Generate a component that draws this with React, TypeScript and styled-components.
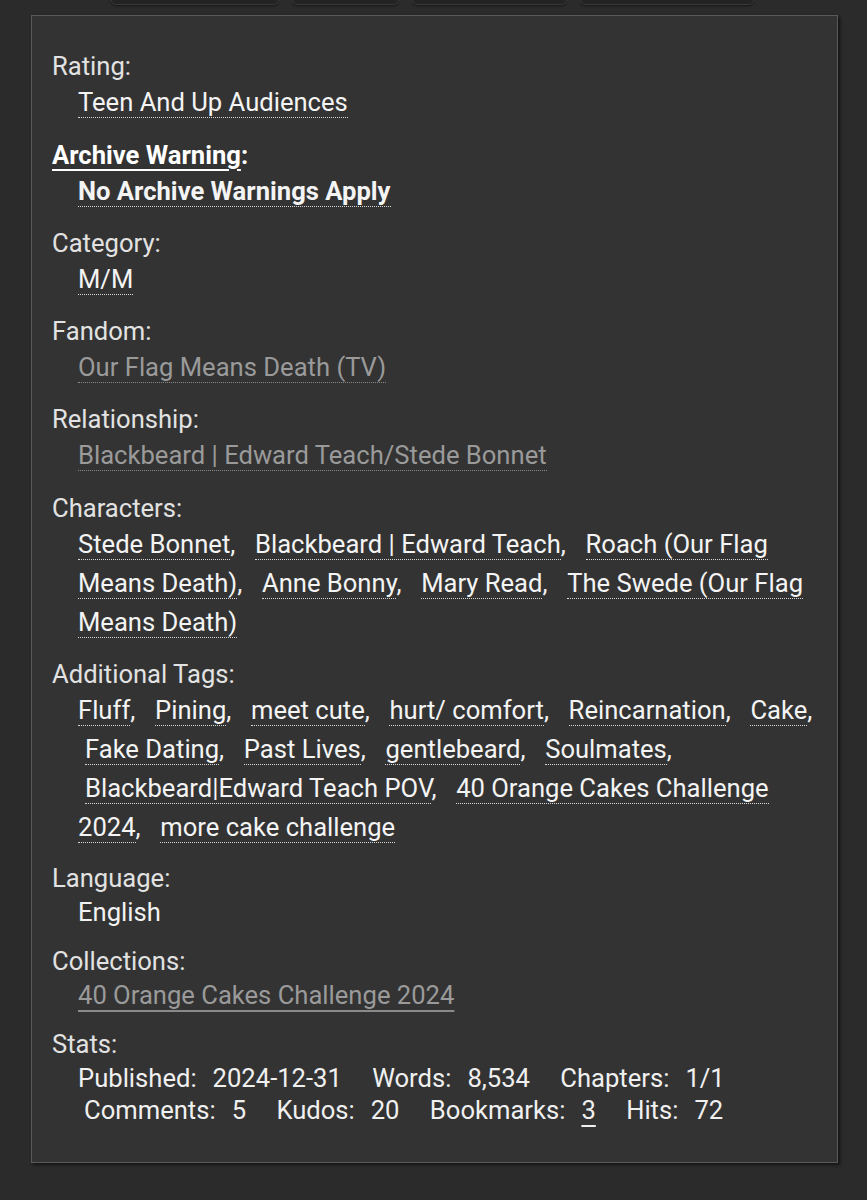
import styled, { createGlobalStyle } from "styled-components";

const GlobalStyle = createGlobalStyle`
  html, body {
    margin: 0;
    padding: 0;
    background: #2b2b2b;
  }
  body {
    font-family: Roboto, "Noto Sans", "Liberation Sans", sans-serif;
    font-size: 25.6px;
    color: #f0f0f0;
  }
`;

const Page = styled.div`
  width: 867px;
  min-height: 1200px;
  background: #2b2b2b;
  overflow: hidden;
`;

const TabRow = styled.div`
  display: flex;
  gap: 13px;
  padding-left: 111px;
  height: 5px;
`;

const Tab = styled.div<{ $w: number }>`
  width: ${(p) => p.$w}px;
  height: 5px;
  background: #232323;
  border: 1px solid #3a3a3a;
  border-top: none;
  border-radius: 0 0 5px 5px;
  box-shadow: 0 1px 2px rgba(0, 0, 0, 0.5);
  box-sizing: border-box;
`;

const Panel = styled.div`
  margin: 10px 29px 0 31px;
  padding: 33px 12px 36px 20px;
  background: #333333;
  border: 1px solid #5a5a5a;
  box-shadow: 2px 2px 3px rgba(0, 0, 0, 0.55);
`;

const Meta = styled.dl`
  margin: 0;
  padding: 0;
`;

const Label = styled.dt<{ $strong?: boolean }>`
  margin: 0;
  line-height: 34px;
  color: ${(p) => (p.$strong ? "#ffffff" : "#e2e2e2")};
  font-weight: ${(p) => (p.$strong ? 700 : 400)};
`;

const LabelLink = styled.span`
  text-decoration: underline;
  text-decoration-thickness: 2px;
  text-underline-offset: 5px;
`;

const Value = styled.dd<{ $plain?: boolean; $gap?: number }>`
  margin: 0 0 ${(p) => p.$gap ?? 15}px 26px;
  line-height: ${(p) => (p.$plain ? 34 : 39)}px;
  color: #f2f2f2;
`;

const TagList = styled.ul`
  list-style: none;
  margin: 0;
  padding: 0;
  display: inline;
`;

const TagItem = styled.li`
  display: inline;

  & + & {
    padding-left: 7px;
  }

  &:not(:last-child)::after {
    content: ",\\00a0\\0020";
  }
`;

const Tag = styled.a<{ $muted?: boolean; $bold?: boolean }>`
  color: ${(p) => (p.$muted ? "#9a9a9a" : "#f4f4f4")};
  font-weight: ${(p) => (p.$bold ? 700 : 400)};
  text-decoration: none;
  border-bottom: 1px dotted ${(p) => (p.$muted ? "#8a8a8a" : "#d8d8d8")};
`;

const CollectionLink = styled.a`
  color: #9a9a9a;
  text-decoration: underline;
  text-decoration-color: #8a8a8a;
  text-decoration-thickness: 2px;
  text-underline-offset: 6px;
`;

const Stats = styled.dd`
  margin: 1px 0 0 26px;
  line-height: 32px;
  color: #f0f0f0;
`;

const StatName = styled.span<{ $first?: boolean }>`
  padding-left: ${(p) => (p.$first ? 0 : 6)}px;
`;

const StatValue = styled.span`
  margin-left: 16px;
  margin-right: 18px;
`;

const StatLink = styled.a`
  color: #f0f0f0;
  text-decoration: underline;
  text-decoration-thickness: 2px;
  text-underline-offset: 6px;
`;

const characters = [
  "Stede Bonnet",
  "Blackbeard | Edward Teach",
  "Roach (Our Flag Means Death)",
  "Anne Bonny",
  "Mary Read",
  "The Swede (Our Flag Means Death)",
];

const freeforms = [
  "Fluff",
  "Pining",
  "meet cute",
  "hurt/ comfort",
  "Reincarnation",
  "Cake",
  "Fake Dating",
  "Past Lives",
  "gentlebeard",
  "Soulmates",
  "Blackbeard|Edward Teach POV",
  "40 Orange Cakes Challenge 2024",
  "more cake challenge",
];

const stats: [string, string, boolean?][] = [
  ["Published:", "2024-12-31"],
  ["Words:", "8,534"],
  ["Chapters:", "1/1"],
  ["Comments:", "5"],
  ["Kudos:", "20"],
  ["Bookmarks:", "3", true],
  ["Hits:", "72"],
];

const Tags = ({ items, muted }: { items: string[]; muted?: boolean }) => (
  <TagList>
    {items.map((t) => (
      <TagItem key={t}>
        <Tag href="#" $muted={muted}>
          {t}
        </Tag>
      </TagItem>
    ))}
  </TagList>
);

export default function App() {
  return (
    <Page>
      <GlobalStyle />
      <TabRow>
        <Tab $w={168} />
        <Tab $w={107} />
        <Tab $w={155} />
        <Tab $w={174} />
      </TabRow>
      <Panel>
        <Meta>
          <Label>Rating:</Label>
          <Value $gap={15.5}>
            <Tags items={["Teen And Up Audiences"]} />
          </Value>

          <Label $strong>
            <LabelLink>Archive Warning</LabelLink>:
          </Label>
          <Value>
            <TagList>
              <TagItem>
                <Tag href="#" $bold>
                  No Archive Warnings Apply
                </Tag>
              </TagItem>
            </TagList>
          </Value>

          <Label>Category:</Label>
          <Value>
            <Tags items={["M/M"]} />
          </Value>

          <Label>Fandom:</Label>
          <Value>
            <Tags items={["Our Flag Means Death (TV)"]} muted />
          </Value>

          <Label>Relationship:</Label>
          <Value $gap={16}>
            <Tags items={["Blackbeard | Edward Teach/Stede Bonnet"]} muted />
          </Value>

          <Label>Characters:</Label>
          <Value>
            <Tags items={characters} />
          </Value>

          <Label>Additional Tags:</Label>
          <Value $gap={14.5}>
            <Tags items={freeforms} />
          </Value>

          <Label>Language:</Label>
          <Value $plain $gap={15}>
            English
          </Value>

          <Label>Collections:</Label>
          <Value $plain $gap={15}>
            <CollectionLink href="#">40 Orange Cakes Challenge 2024</CollectionLink>
          </Value>

          <Label>Stats:</Label>
          <Stats>
            {stats.map(([name, value, link], i) => (
              <span key={name}>
                {i > 0 && " "}
                <StatName $first={i === 0}>{name}</StatName>
                <StatValue>{link ? <StatLink href="#">{value}</StatLink> : value}</StatValue>
              </span>
            ))}
          </Stats>
        </Meta>
      </Panel>
    </Page>
  );
}
